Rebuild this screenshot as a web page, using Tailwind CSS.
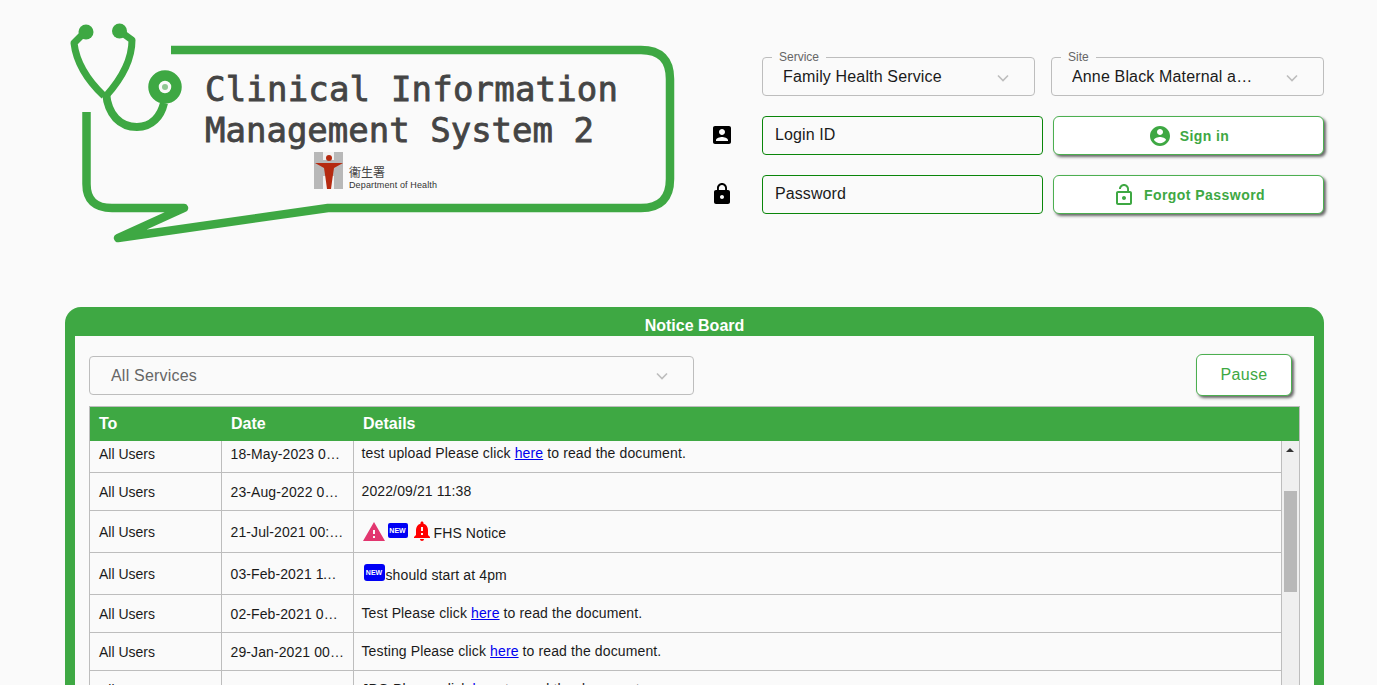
<!DOCTYPE html>
<html>
<head>
<meta charset="utf-8">
<title>Clinical Information Management System 2</title>
<script src="https://cdn.jsdelivr.net/npm/@tailwindcss/browser@4"></script>
</head>
<body class="h-[685px] overflow-hidden bg-[#fafafa] font-['Liberation_Sans',Arial,sans-serif] text-[#1a1a1a]">

<!-- Header: logo + login form -->
<div class="flex h-[307px] pl-[65px]">
    <svg class="mt-[20px] h-[228px] w-[620px] shrink-0" viewBox="65 20 620 228" fill="none">
        <!-- speech bubble -->
        <path d="M171 50H641Q670 50 670 79V179Q670 208 641 208H328L118 238L184 208H112Q86.500 208 86.500 184V112" stroke="#3ea843" stroke-width="8.500" stroke-linejoin="round"/>
        <!-- stethoscope -->
        <path d="M84 33L74 43C76 60 85 78 104 96M121 32L132 40C132 58 124 76 106 96" stroke="#3ea843" stroke-width="7" stroke-linejoin="round"/>
        <circle cx="86" cy="32" r="7.500" fill="#3ea843"/>
        <circle cx="119.500" cy="31" r="7.500" fill="#3ea843"/>
        <path d="M106 93C108 115 120 127 137 127C152 127 161 116 164 103" stroke="#3ea843" stroke-width="8"/>
        <circle cx="165" cy="87" r="11.500" stroke="#3ea843" stroke-width="10.500"/>
        <circle cx="165" cy="87" r="3" fill="#8fc792"/>
        <!-- title -->
        <text x="205" y="101" textLength="413" font-family="DejaVu Sans Mono" font-size="34" fill="#444" stroke="#444" stroke-width="0.8">Clinical Information</text>
        <text x="205" y="142" textLength="389" font-family="DejaVu Sans Mono" font-size="34" fill="#444" stroke="#444" stroke-width="0.8">Management System 2</text>
        <!-- department of health mark -->
        <rect x="314" y="152" width="29" height="37" fill="#b8b8b8"/>
        <rect x="323" y="152" width="11" height="8" fill="#f2f2f2"/>
        <rect x="323" y="176" width="11" height="13" fill="#f2f2f2"/>
        <circle cx="329" cy="158" r="3" fill="#b52a10"/>
        <path d="M315 163H343L334 168L332.500 178L331 189H327L325.500 178L324 168Z" fill="#b52a10"/>
        <text x="349" y="177" font-family="Noto Sans CJK TC" font-size="12" fill="#444">衞生署</text>
        <text x="349" y="188" textLength="88" font-family="Liberation Sans" font-size="9" fill="#333">Department of Health</text>
    </svg>

    <div class="ml-[27px] grid h-fit w-[612px] grid-cols-[50px_281px_10px_271px] pt-[57px]">
        <!-- service/site selects -->
        <div class="col-span-3 col-start-2 mb-[20px] flex gap-[16px]">
            <div class="relative flex h-[39px] w-[273px] items-center justify-between rounded-[4px] border border-[#bdbdbd] pl-[20px] pr-[23px] text-[16px] tracking-[0.15px]">
                <span class="absolute -top-[7px] left-[9px] bg-[#fafafa] px-[7px] text-[12px] leading-[13px] tracking-normal text-[#666]">Service</span>
                <span class="truncate">Family Health Service</span>
                <svg class="ml-3 mt-[2px] h-[16px] w-[16px] shrink-0" viewBox="0 0 16 16" fill="none" stroke="#bdbdbd" stroke-width="1.6"><path d="M3 5.5l5 5 5-5"/></svg>
            </div>
            <div class="relative flex h-[39px] w-[273px] items-center justify-between rounded-[4px] border border-[#bdbdbd] pl-[20px] pr-[23px] text-[16px] tracking-[0.15px]">
                <span class="absolute -top-[7px] left-[9px] bg-[#fafafa] px-[7px] text-[12px] leading-[13px] tracking-normal text-[#666]">Site</span>
                <span class="truncate">Anne Black Maternal and Child Health Centre</span>
                <svg class="ml-[31px] mt-[2px] h-[16px] w-[16px] shrink-0" viewBox="0 0 16 16" fill="none" stroke="#bdbdbd" stroke-width="1.6"><path d="M3 5.5l5 5 5-5"/></svg>
            </div>
        </div>

        <!-- login id -->
        <div class="flex items-center pb-[1px]">
            <svg class="-ml-[2px] h-[24px] w-[24px]" viewBox="0 0 24 24" fill="#000"><path d="M3 5v14c0 1.1.89 2 2 2h14c1.1 0 2-.9 2-2V5c0-1.1-.9-2-2-2H5c-1.11 0-2 .9-2 2zm12 4c0 1.66-1.34 3-3 3s-3-1.34-3-3 1.34-3 3-3 3 1.34 3 3zm-9 8c0-2 4-3.1 6-3.1s6 1.1 6 3.1v1H6v-1z"/></svg>
        </div>
        <div class="flex h-[39px] items-center rounded-[4px] border border-[#0a860a] pb-[2px] pl-[12px] text-[16px] tracking-[0.1px]">Login ID</div>
        <div></div>
        <button class="flex h-[39px] items-center justify-center gap-[8px] rounded-[6px] border border-[#4caf50] bg-white text-[14px] font-bold tracking-[0.4px] text-[#3ea843] shadow-[2px_2px_3px_#666]">
            <svg class="h-[24px] w-[24px]" viewBox="0 0 24 24" fill="#3ea843"><path d="M12 2C6.48 2 2 6.48 2 12s4.48 10 10 10 10-4.48 10-10S17.52 2 12 2zm0 3c1.66 0 3 1.34 3 3s-1.34 3-3 3-3-1.34-3-3 1.34-3 3-3zm0 14.2c-2.5 0-4.71-1.28-6-3.22.03-1.99 4-3.08 6-3.08 1.99 0 5.97 1.09 6 3.08-1.29 1.94-3.5 3.22-6 3.22z"/></svg>
            <span class="pt-[2px]">Sign in</span>
        </button>

        <div class="col-span-4 h-[20px]"></div>

        <!-- password -->
        <div class="flex items-center pb-[1px]">
            <svg class="-ml-[2px] h-[24px] w-[24px]" viewBox="0 0 24 24" fill="#000"><path d="M18 8h-1V6c0-2.76-2.24-5-5-5S7 3.24 7 6v2H6c-1.1 0-2 .9-2 2v10c0 1.1.9 2 2 2h12c1.1 0 2-.9 2-2V10c0-1.1-.9-2-2-2zm-6 9c-1.1 0-2-.9-2-2s.9-2 2-2 2 .9 2 2-.9 2-2 2zm3.1-9H8.9V6c0-1.71 1.39-3.1 3.1-3.1 1.71 0 3.1 1.39 3.1 3.1v2z"/></svg>
        </div>
        <div class="flex h-[39px] items-center rounded-[4px] border border-[#0a860a] pb-[2px] pl-[12px] text-[16px] tracking-[0.1px]">Password</div>
        <div></div>
        <button class="flex h-[39px] items-center justify-center gap-[8px] rounded-[6px] border border-[#4caf50] bg-white text-[14px] font-bold tracking-[0.45px] text-[#3ea843] shadow-[2px_2px_3px_#666]">
            <svg class="h-[24px] w-[24px]" viewBox="0 0 24 24" fill="#3ea843"><path d="M12 17c1.1 0 2-.9 2-2s-.9-2-2-2-2 .9-2 2 .9 2 2 2zm6-9h-1V6c0-2.76-2.24-5-5-5S7 3.24 7 6h1.9c0-1.71 1.39-3.1 3.1-3.1 1.71 0 3.1 1.39 3.1 3.1v2H6c-1.1 0-2 .9-2 2v10c0 1.1.9 2 2 2h12c1.1 0 2-.9 2-2V10c0-1.1-.9-2-2-2zm0 12H6V10h12v10z"/></svg>
            <span class="pt-[2px]">Forgot Password</span>
        </button>
    </div>
</div>

<!-- Notice board -->
<div class="ml-[65px] w-[1259px] rounded-t-[16px] bg-[#3ea843] px-[10px]">
    <div class="h-[29px] pt-[10px] text-center text-[16px] font-bold leading-[18px] text-white">Notice Board</div>
    <div class="h-[349px] overflow-hidden bg-[#fafafa] px-[14px] pt-[19px]">
        <div class="flex h-[51px] items-start justify-between pr-[8px]">
            <div class="mt-[1px] flex h-[39px] w-[605px] items-center justify-between rounded-[4px] border border-[#bdbdbd] pl-[21px] pr-[23px] text-[16px] tracking-[0.2px] text-[#666]">
                All Services
                <svg class="h-[16px] w-[16px]" viewBox="0 0 16 16" fill="none" stroke="#bdbdbd" stroke-width="1.6"><path d="M3 5.5l5 5 5-5"/></svg>
            </div>
            <button class="-mt-[1px] h-[42px] w-[96px] rounded-[6px] border border-[#4caf50] bg-white text-[16px] tracking-[0.3px] text-[#3ea843] shadow-[2px_2px_3px_#666]">Pause</button>
        </div>

        <div class="w-[1211px] border-x border-t border-[#bdbdbd]">
            <div class="grid h-[34px] grid-cols-[131px_132px_1fr] items-center bg-[#3ea843] text-[16px] font-bold text-white">
                <span class="pl-[9px]">To</span>
                <span class="pl-[10px]">Date</span>
                <span class="pl-[10px]">Details</span>
            </div>
            <div class="flex">
                <table class="w-[1191px] table-fixed border-collapse text-[14px]">
                    <colgroup>
                        <col class="w-[131px]">
                        <col class="w-[132px]">
                        <col>
                    </colgroup>
                    <tbody>
                        <tr class="h-[31px]">
                            <td class="border-r border-b border-[#bdbdbd] pb-[4px] pl-[9px]">All Users</td>
                            <td class="truncate border-r border-b border-[#bdbdbd] pb-[4px] pl-[9px] pr-[8px] tracking-[0.1px]">18-May-2023 00:00</td>
                            <td class="border-b border-[#bdbdbd] pb-[6px] pl-[8px] tracking-[0.12px]">test upload Please click <a href="#" class="text-[#0000ee] underline">here</a> to read the document.</td>
                        </tr>
                        <tr class="h-[38px]">
                            <td class="border-r border-b border-[#bdbdbd] pt-[2px] pl-[9px]">All Users</td>
                            <td class="truncate border-r border-b border-[#bdbdbd] pt-[2px] pl-[9px] pr-[8px] tracking-[0.1px]">23-Aug-2022 00:00</td>
                            <td class="border-b border-[#bdbdbd] pl-[8px] tracking-[0.12px]">2022/09/21 11:38</td>
                        </tr>
                        <tr class="h-[42px]">
                            <td class="border-r border-b border-[#bdbdbd] pt-[2px] pl-[9px]">All Users</td>
                            <td class="truncate border-r border-b border-[#bdbdbd] pt-[2px] pl-[9px] pr-[8px] tracking-[0.1px]">21-Jul-2021 00:00:00</td>
                            <td class="border-b border-[#bdbdbd] pt-[4px] pl-[8px] tracking-[0.12px]">
                                <div class="flex items-center">
                                    <svg class="mb-[2px] h-[24px] w-[24px]" viewBox="0 0 24 24" fill="#e2366f"><path d="M1 21h22L12 2 1 21zm12-3h-2v-2h2v2zm0-4h-2v-4h2v4z"/></svg>
                                    <span class="mb-[5px] ml-[2px] flex h-[15px] w-[20px] items-center justify-center rounded-[2px] bg-[#0000f5] text-[7px] font-bold leading-none tracking-normal text-white">NEW</span>
                                    <svg class="mb-[4px] ml-[2px] h-[24px] w-[24px]" viewBox="0 0 24 24" fill="#ff0000"><path d="M18 16v-5c0-3.07-1.64-5.64-4.5-6.32V4c0-.83-.67-1.5-1.5-1.5s-1.5.67-1.5 1.5v.68C7.63 5.36 6 7.92 6 11v5l-2 2v1h16v-1l-2-2zm-5 0h-2v-2h2v2zm0-4h-2V8h2v4zm-1 10c1.1 0 2-.9 2-2h-4c0 1.1.9 2 2 2z"/></svg>
                                    <span>FHS Notice</span>
                                </div>
                            </td>
                        </tr>
                        <tr class="h-[42px]">
                            <td class="border-r border-b border-[#bdbdbd] pt-[2px] pl-[9px]">All Users</td>
                            <td class="truncate border-r border-b border-[#bdbdbd] pt-[2px] pl-[9px] pr-[12px] tracking-[0.1px]">03-Feb-2021 11:00</td>
                            <td class="border-b border-[#bdbdbd] pt-[4px] pl-[10px] tracking-[0.12px]">
                                <div class="flex items-center">
                                    <span class="mb-[6px] flex h-[17px] w-[21px] items-center justify-center rounded-[3px] bg-[#0000f5] text-[7px] font-bold leading-none tracking-normal text-white">NEW</span>
                                    <span class="ml-[1px]">should start at 4pm</span>
                                </div>
                            </td>
                        </tr>
                        <tr class="h-[38px]">
                            <td class="border-r border-b border-[#bdbdbd] pt-[2px] pl-[9px]">All Users</td>
                            <td class="truncate border-r border-b border-[#bdbdbd] pt-[2px] pl-[9px] pr-[8px] tracking-[0.1px]">02-Feb-2021 00:00</td>
                            <td class="border-b border-[#bdbdbd] pl-[8px] tracking-[0.12px]">Test Please click <a href="#" class="text-[#0000ee] underline">here</a> to read the document.</td>
                        </tr>
                        <tr class="h-[38px]">
                            <td class="border-r border-b border-[#bdbdbd] pt-[2px] pl-[9px]">All Users</td>
                            <td class="truncate border-r border-b border-[#bdbdbd] pt-[2px] pl-[9px] pr-[8px] tracking-[0.1px]">29-Jan-2021 00:00:00</td>
                            <td class="border-b border-[#bdbdbd] pl-[8px] tracking-[0.12px]">Testing Please click <a href="#" class="text-[#0000ee] underline">here</a> to read the document.</td>
                        </tr>
                        <tr class="h-[38px]">
                            <td class="border-r border-[#bdbdbd] pt-[2px] pl-[9px]">All Users</td>
                            <td class="truncate border-r border-[#bdbdbd] pt-[2px] pl-[9px] pr-[8px] tracking-[0.1px]">28-Jan-2021 00:00</td>
                            <td class="pl-[8px] tracking-[0.12px]">JPG Please click <a href="#" class="text-[#0000ee] underline">here</a> to read the document.</td>
                        </tr>
                    </tbody>
                </table>
                <!-- scrollbar -->
                <div class="relative w-[18px] shrink-0 border-l border-[#bdbdbd] bg-[#efefef]">
                    <div class="absolute left-[4px] top-[7px] h-0 w-0 border-x-[4px] border-b-[4px] border-x-transparent border-b-[#333]"></div>
                    <div class="absolute left-[2px] top-[50px] h-[101px] w-[13px] bg-[#b8b8b8]"></div>
                </div>
            </div>
        </div>
    </div>
</div>

</body>
</html>
